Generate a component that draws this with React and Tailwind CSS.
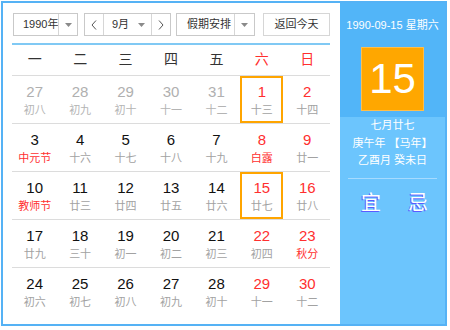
import React from 'react'

const FONT = { fontFamily: '"Liberation Sans", "Noto Sans CJK SC", sans-serif' }

const WEEK = ['一', '二', '三', '四', '五', '六', '日']

// [day, lunar, kind]  kind: o = other month, r = weekend red, f = festival lunar red, b = boxed
const ROWS = [
  [[27, '初八', 'o'], [28, '初九', 'o'], [29, '初十', 'o'], [30, '十一', 'o'], [31, '十二', 'o'], [1, '十三', 'rb'], [2, '十四', 'r']],
  [[3, '中元节', 'f'], [4, '十六', ''], [5, '十七', ''], [6, '十八', ''], [7, '十九', ''], [8, '白露', 'rf'], [9, '廿一', 'r']],
  [[10, '教师节', 'f'], [11, '廿三', ''], [12, '廿四', ''], [13, '廿五', ''], [14, '廿六', ''], [15, '廿七', 'rb'], [16, '廿八', 'r']],
  [[17, '廿九', ''], [18, '三十', ''], [19, '初一', ''], [20, '初二', ''], [21, '初三', ''], [22, '初四', 'r'], [23, '秋分', 'rf']],
  [[24, '初六', ''], [25, '初七', ''], [26, '初八', ''], [27, '初九', ''], [28, '初十', ''], [29, '十一', 'r'], [30, '十二', 'r']],
]

function Caret() {
  return (
    <svg width="7" height="4" viewBox="0 0 7 4" className="shrink-0">
      <path d="M0 0h7L3.5 4z" fill="#8a8a8a" />
    </svg>
  )
}

function Chevron({ dir }) {
  return (
    <svg width="6" height="10" viewBox="0 0 6 10">
      <path d={dir === 'left' ? 'M5 0.5L1 5l4 4.5' : 'M1 0.5L5 5l-4 4.5'} fill="none" stroke="#555" strokeWidth="1" />
    </svg>
  )
}

function DayCell({ day, lunar, kind }) {
  const other = kind.includes('o')
  const red = kind.includes('r')
  const fest = kind.includes('f')
  const boxed = kind.includes('b')
  const numColor = other ? 'text-[#b0b0b0]' : red ? 'text-[#ff2f2f]' : 'text-[#111]'
  const lunarColor = fest ? 'text-[#ff2f2f]' : other ? 'text-[#b4b4b4]' : 'text-[#a2a2a2]'
  return (
    <div className="flex h-[47px] justify-center">
      <div className={`flex flex-col items-center w-[43px] ${boxed ? 'border-2 border-[#ffa500] pt-[5px]' : 'pt-[7px]'}`}>
        <span className={`text-[15px] leading-[18px] ${numColor}`}>{day}</span>
        <span className={`mt-[2px] text-[11px] leading-[14px] whitespace-nowrap ${lunarColor}`}>{lunar}</span>
      </div>
    </div>
  )
}

export default function App() {
  return (
    <div className="w-[450px] h-[330px] bg-white p-px" style={FONT}>
      <div className="flex w-[446px] h-[325px] border-2 border-[#55b2f5]">
        {/* calendar */}
        <div className="w-[337px] pl-[9px] pr-[10px] pt-[10px]">
          <div className="flex h-[23px] text-[11px] text-[#333] whitespace-nowrap">
            <div className="ml-px flex w-[65px] border border-[#c9c9c9]">
              <div className="flex-1 flex items-center pl-[9px]">1990年</div>
              <div className="w-[19px] border-l border-[#d6d6d6] flex items-center justify-center"><Caret /></div>
            </div>
            <div className="ml-[6px] flex w-[87px] border border-[#c9c9c9]">
              <div className="w-[19px] flex items-center justify-center border-r border-[#d6d6d6]"><Chevron dir="left" /></div>
              <div className="flex-1 flex items-center justify-between pl-[8px] pr-[6px]">
                <span>9月</span>
                <Caret />
              </div>
              <div className="w-[19px] flex items-center justify-center border-l border-[#d6d6d6]"><Chevron dir="right" /></div>
            </div>
            <div className="ml-[5px] flex w-[79px] border border-[#c9c9c9]">
              <div className="flex-1 flex items-center pl-[10px]">假期安排</div>
              <div className="w-[20px] border-l border-[#d6d6d6] flex items-center justify-center"><Caret /></div>
            </div>
            <div className="ml-[8px] flex w-[67px] items-center justify-center border border-[#d6d6d6]">返回今天</div>
          </div>

          <div className="mt-[7px] h-[2px] bg-[#80c9f4]" />

          <div className="grid grid-cols-7 h-[30px] items-center pb-[2px] text-[14px]">
            {WEEK.map((w, i) => (
              <div key={w} className={`text-center ${i > 4 ? 'text-[#ff2f2f]' : 'text-[#333]'}`}>{w}</div>
            ))}
          </div>

          {ROWS.map((row, r) => (
            <div key={r} className="grid grid-cols-7 border-t border-[#dcdcdc]">
              {row.map(([d, l, k], i) => (
                <DayCell key={i} day={d} lunar={l} kind={k} />
              ))}
            </div>
          ))}
        </div>

        {/* side panel */}
        <div className="flex-1 flex flex-col bg-[#6cc5fd] text-white">
          <div className="h-[114px] bg-[#52b5f8] flex flex-col items-center pt-[15px]">
            <div className="text-[11px] leading-[14px] whitespace-nowrap">1990-09-15 星期六</div>
            <div className="mt-[15px] w-[63px] h-[64px] bg-[#ffa700] border border-[#ffbe4a] flex items-center justify-center text-[42px] leading-none">15</div>
          </div>
          <div className="flex flex-col items-center text-[11px] leading-[17.5px]">
            <div>七月廿七</div>
            <div className="whitespace-nowrap">庚午年 【马年】</div>
            <div className="whitespace-nowrap">乙酉月 癸未日</div>
          </div>
          <div className="mt-[8px] mx-[8px] h-px bg-[#a6dbff]" />
          <div className="mt-[12px] flex justify-center gap-[27px] pl-[4px] text-[20px] leading-[24px] [text-shadow:-1px_1px_0_#5b5bff]">
            <span>宜</span>
            <span>忌</span>
          </div>
        </div>
      </div>
    </div>
  )
}
